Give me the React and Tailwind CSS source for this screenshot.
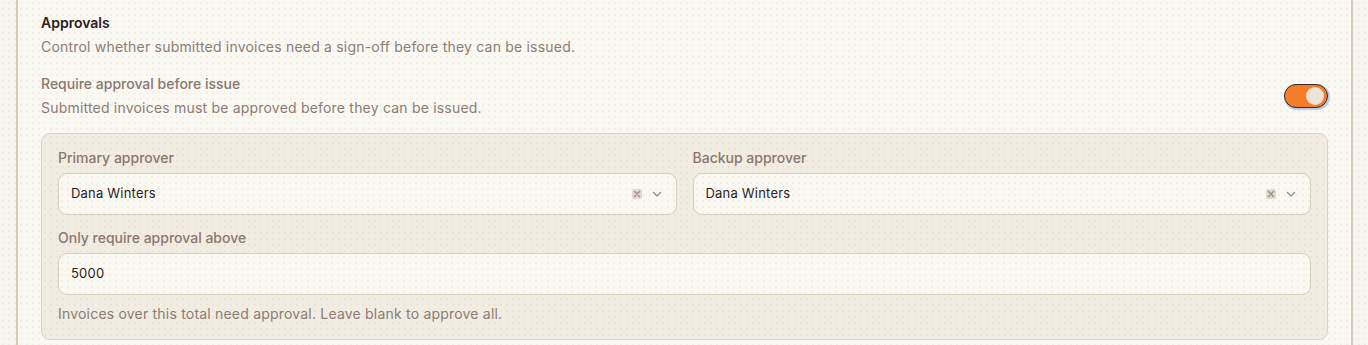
import React from "react";

const dots = "bg-[radial-gradient(circle,rgba(170,150,120,0.10)_1px,transparent_1.2px)] bg-[size:6px_6px]";

function Chevron() {
  return (
    <svg width="12" height="12" viewBox="0 0 12 12" fill="none" stroke="#9b8b82" strokeWidth="1.3" strokeLinecap="round" strokeLinejoin="round">
      <path d="M2.5 4.5 6 8l3.5-3.5" />
    </svg>
  );
}

function Clear() {
  return (
    <span className="flex h-[10px] w-[10px] items-center justify-center rounded-[2px] bg-[#e0d9d0]">
      <svg width="8" height="8" viewBox="0 0 8 8" fill="none" stroke="#9d8c82" strokeWidth="1.3" strokeLinecap="round">
        <path d="M1.5 1.5l5 5M6.5 1.5l-5 5" />
      </svg>
    </span>
  );
}

function Select({ value }) {
  return (
    <div className={`flex h-[42px] items-center justify-between rounded-[9px] border border-[#d8cfc0] bg-[#faf8f3] ${dots} pl-[12px] pr-[13px]`}>
      <span className="text-[13px] tracking-[0.2px] text-[#2c231e]">{value}</span>
      <div className="flex items-center gap-[9px]">
        <Clear />
        <Chevron />
      </div>
    </div>
  );
}

const muted = "text-[14px] leading-[18px] tracking-[0.2px] text-[#8c7c74]";
const label = "block text-[14px] font-medium leading-[18px] text-[#8a776d]";

export default function App() {
  return (
    <div className={`min-h-[345px] w-full bg-[#f8f5ee] ${dots} pl-[16px] pr-[15px] font-['Inter',sans-serif]`}>
      <div className={`h-[345px] border-x-2 border-[#d6cbb9] bg-[#faf8f3] ${dots} pl-[23px] pr-[23px] pt-[14px]`}>
        <h2 className="text-[14px] font-semibold leading-[18px] text-[#2a211c]">Approvals</h2>
        <p className={`mt-[6px] ${muted}`}>Control whether submitted invoices need a sign-off before they can be issued.</p>

        <div className="mt-[19px] flex items-center justify-between">
          <div>
            <div className={label}>Require approval before issue</div>
            <div className={`mt-[6px] ${muted}`}>Submitted invoices must be approved before they can be issued.</div>
          </div>
          <button className="relative h-[24px] w-[44px] shrink-0 rounded-full border border-[#3a2a22] bg-[#f57d2a] shadow-[1px_1px_0_1px_rgba(150,185,240,0.7)]">
            <span className="absolute right-[3px] top-[2px] h-[18px] w-[18px] rounded-full bg-[#ece4d6]" />
          </button>
        </div>

        <div className={`mt-[16px] rounded-[9px] border border-[#dbd2c2] bg-[#f2ede3] ${dots} px-[16px] pb-[16px] pt-[15px]`}>
          <div className="grid grid-cols-2 gap-[16px]">
            <div>
              <label className={label}>Primary approver</label>
              <div className="mt-[6px]"><Select value="Dana Winters" /></div>
            </div>
            <div>
              <label className={label}>Backup approver</label>
              <div className="mt-[6px]"><Select value="Dana Winters" /></div>
            </div>
          </div>
          <label className={`mt-[14px] ${label}`}>Only require approval above</label>
          <div className={`mt-[6px] flex h-[42px] items-center rounded-[9px] border border-[#d8cfc0] bg-[#faf8f3] ${dots} px-[12px]`}>
            <span className="text-[13px] tracking-[0.2px] text-[#2c231e]">5000</span>
          </div>
          <p className={`mt-[10px] ${muted}`}>Invoices over this total need approval. Leave blank to approve all.</p>
        </div>
      </div>
    </div>
  );
}
